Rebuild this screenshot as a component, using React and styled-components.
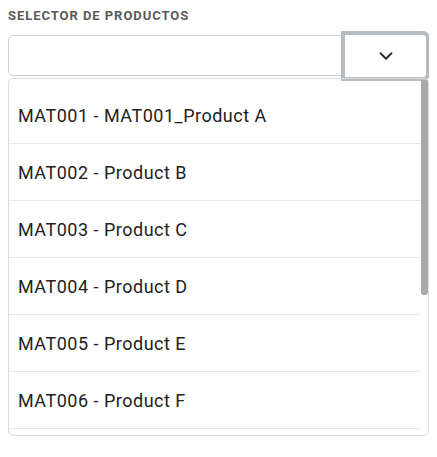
import React from 'react'
import styled, { createGlobalStyle } from 'styled-components'
import { ChevronDown } from 'lucide-react'

const GlobalStyle = createGlobalStyle`
  body {
    margin: 8px;
    background: #fff;
    font-family: Roboto, "Liberation Sans", sans-serif;
  }
`

const Label = styled.div`
  font-size: 13px;
  font-weight: 700;
  letter-spacing: 0.95px;
  color: #5a5a5a;
  text-transform: uppercase;
  line-height: 16px;
`

const Field = styled.div`
  position: relative;
  margin-top: 11px;
  height: 41px;
  border: 1px solid #d0d0d4;
  border-radius: 5px;
  box-sizing: border-box;
`

const Toggle = styled.button`
  position: absolute;
  top: -5px;
  right: -2px;
  width: 89px;
  height: 50px;
  box-sizing: border-box;
  border: 4px solid #b6bbbf;
  border-radius: 0 7px 7px 0;
  background: #fff;
  display: flex;
  align-items: center;
  justify-content: center;
  padding: 0;
  color: #2a2a2a;
  cursor: pointer;
`

const ListBox = styled.div`
  position: relative;
  margin-top: 2px;
`

const List = styled.ul`
  list-style: none;
  margin: 0;
  padding: 8px 7px 8px 0;
  max-height: 358px;
  box-sizing: border-box;
  overflow: hidden;
  border: 1px solid #dcdcdc;
  border-radius: 5px;
`

const Thumb = styled.div`
  position: absolute;
  top: 2px;
  right: 1px;
  width: 7px;
  height: 215px;
  background: #a9a9a9;
  border-radius: 1px 1px 3px 3px;
`

const Item = styled.li`
  height: 56px;
  display: flex;
  align-items: center;
  padding-left: 9px;
  border-bottom: 1px solid #e8e8e8;
  font-size: 18px;
  letter-spacing: 0.5px;
  color: #222;
`

const products = [
  'MAT001 - MAT001_Product A',
  'MAT002 - Product B',
  'MAT003 - Product C',
  'MAT004 - Product D',
  'MAT005 - Product E',
  'MAT006 - Product F',
  'MAT007 - Product G',
  'MAT008 - Product H',
  'MAT009 - Product I',
  'MAT010 - Product J',
]

export default function App() {
  return (
    <>
      <GlobalStyle />
      <Label>Selector de productos</Label>
      <Field>
        <Toggle aria-label="Abrir">
          <ChevronDown size={22} strokeWidth={2} />
        </Toggle>
      </Field>
      <ListBox>
        <List>
          {products.map((p) => (
            <Item key={p}>{p}</Item>
          ))}
        </List>
        <Thumb />
      </ListBox>
    </>
  )
}
